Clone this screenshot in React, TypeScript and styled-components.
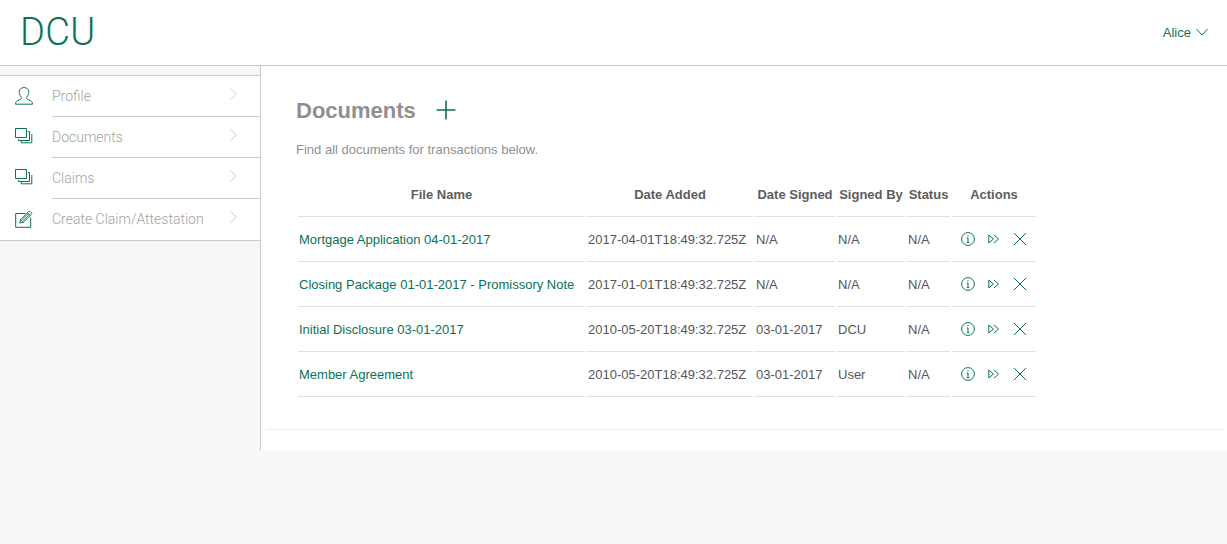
import React from "react";
import styled, { createGlobalStyle } from "styled-components";

const green = "#0b7256";

const Global = createGlobalStyle`
  html, body { margin: 0; padding: 0; background: #f7f7f7; }
  body { font-family: "Liberation Sans", Arial, sans-serif; }
`;

const Page = styled.div`
  width: 1227px;
  height: 544px;
  overflow: hidden;
  background: #f7f7f7;
`;

const Header = styled.header`
  height: 65px;
  background: #fff;
  border-bottom: 1px solid #c9c9c9;
  display: flex;
  align-items: flex-start;
  justify-content: space-between;
`;

const Logo = styled.div`
  font-family: Roboto, sans-serif;
  font-weight: 300;
  font-size: 38px;
  letter-spacing: 0.3px;
  line-height: 44px;
  margin: 10px 0 0 20px;
  color: ${green};
`;

const UserMenu = styled.div`
  display: flex;
  align-items: flex-start;
  gap: 5px;
  margin: 25px 19px 0 0;
  font-size: 13px;
  line-height: 15px;
  color: ${green};
  svg { margin-top: 3px; }
`;

const Body = styled.div`
  display: flex;
  height: 384px;
`;

const Sidebar = styled.nav`
  width: 260px;
  padding-top: 9px;
  border-right: 1px solid #c9c9c9;
  flex: none;
`;

const NavList = styled.ul`
  list-style: none;
  margin: 0;
  padding: 0;
  background: #fff;
  border-top: 1px solid #c9c9c9;
  border-bottom: 1px solid #c9c9c9;
`;

const NavItem = styled.li`
  height: 41px;
  display: flex;
  align-items: center;
  color: #a3a3a3;
  font-family: Roboto, sans-serif;
  font-weight: 300;
  font-size: 14px;
  &:not(:last-child) > span { border-bottom-color: #c9c9c9; }
`;

const NavIcon = styled.div`
  width: 52px;
  height: 100%;
  flex: none;
  padding: 11px 0 0 15px;
  box-sizing: border-box;
  svg { display: block; }
`;

const NavLabel = styled.span`
  flex: 1;
  height: 100%;
  box-sizing: border-box;
  display: flex;
  align-items: center;
  justify-content: space-between;
  padding: 0 23px 0 0;
  border-bottom: 1px solid transparent;
`;

const Main = styled.main`
  flex: 1;
  background: #fff;
  padding: 24px 3px 0 5px;
`;

const TitleRow = styled.div`
  display: flex;
  align-items: center;
  gap: 20px;
  height: 40px;
  margin-left: 30px;
`;

const Title = styled.h1`
  margin: 0;
  padding-top: 1px;
  font-size: 22px;
  font-weight: 700;
  color: #8f8f8f;
`;

const Lead = styled.p`
  margin: 11px 0 0 30px;
  font-size: 13px;
  line-height: 18px;
  color: #8f8f92;
`;

const Table = styled.table`
  margin: 11px 0 0 30px;
  border-collapse: separate;
  border-spacing: 2px 0;
  table-layout: fixed;
  width: 742px;
  font-size: 13px;
`;

const Th = styled.th`
  height: 47px;
  padding: 2px 0 0;
  box-sizing: border-box;
  text-align: center;
  border-bottom: 1px solid #e2e2e2;
  color: #5d5d60;
  font-size: 13px;
  font-weight: 700;
  white-space: nowrap;
`;

const Td = styled.td`
  height: 45px;
  padding: 0 1px;
  box-sizing: border-box;
  border-bottom: 1px solid #e2e2e2;
  color: #55555a;
  white-space: nowrap;
  overflow: visible;
`;

const FileLink = styled.a`
  color: ${green};
  text-decoration: none;
`;

const Actions = styled.div`
  display: flex;
  align-items: center;
  gap: 12px;
  padding-left: 8px;
  svg { display: block; flex: none; }
`;

const Divider = styled.hr`
  margin: 32px 0 0 0;
  border: 0;
  border-top: 1px solid #ececec;
`;

const Svg = styled.svg`
  fill: none;
  stroke: ${green};
  stroke-width: 1;
`;

const Chevron = () => (
  <svg width="7" height="12" viewBox="0 0 7 12" fill="none" stroke="#cfcfcf" strokeWidth="1" style={{ marginTop: -4 }}>
    <path d="M.5.5L6.3 6 .5 11.5" />
  </svg>
);

const UserIcon = () => (
  <Svg width="18" height="18" viewBox="0 0 18 18">
    <path d="M.5 17.2h17c0-2.6-1.6-3.5-3.6-4.2-1.6-.6-2.4-1-2.4-2.2 0-.8 1.6-2 1.9-3.6.2-.2.4-.8.3-3C13.4 2 11.7.6 9 .6S4.6 2 4.3 4.2c-.1 2.2.1 2.8.3 3 .3 1.6 1.9 2.8 1.9 3.6 0 1.2-.8 1.6-2.4 2.2C2.1 13.7.5 14.6.5 17.2z" />
  </Svg>
);

const DocsIcon = () => (
  <Svg width="18" height="16" viewBox="0 0 18 16">
    <path d="M.5.5h11v9H.5z" />
    <path d="M13 3.5h1.5v9h-11V11" />
    <path d="M16.8 6v8.8H6.2V12.8" />
  </Svg>
);

const EditIcon = () => (
  <Svg width="18" height="18" viewBox="0 0 18 18">
    <path d="M10.5 3.5H.7v13.8h15V7.5" />
    <path d="M4.8 13l.9-3.4L13.6 1.6c.5-.5 1.1-.5 1.6 0l1.2 1.2c.5.5.5 1.1 0 1.6L8.3 12.2z" />
    <path d="M5.7 9.6l2.6 2.6M12.4 2.9l2.7 2.7M7 9.8l6.5-6.5M8 10.8l6.5-6.5" strokeWidth=".8" />
  </Svg>
);

const InfoIcon = () => (
  <Svg width="14" height="14" viewBox="0 0 14 14">
    <circle cx="7" cy="7" r="6.4" />
    <path d="M7 3v1.4M7 6v4.6M5.8 6H7M5.8 10.6h2.4" />
  </Svg>
);

const ForwardIcon = () => (
  <Svg width="12" height="10" viewBox="0 0 12 10" style={{ marginLeft: 1 }}>
    <path d="M.8 1v8l4.6-4z" />
    <path d="M6 1l4.6 4L6 9" />
  </Svg>
);

const CloseIcon = () => (
  <Svg width="14" height="14" viewBox="0 0 14 14" style={{ marginLeft: 1 }}>
    <path d="M1 1l12 12M13 1L1 13" />
  </Svg>
);

const PlusIcon = () => (
  <Svg width="20" height="20" viewBox="0 0 20 20" style={{ strokeWidth: 1.6 }}>
    <path d="M10 .5v19M.5 10h19" />
  </Svg>
);

const nav = [
  { label: "Profile", icon: <UserIcon /> },
  { label: "Documents", icon: <DocsIcon /> },
  { label: "Claims", icon: <DocsIcon /> },
  { label: "Create Claim/Attestation", icon: <EditIcon /> },
];

const rows = [
  ["Mortgage Application 04-01-2017", "2017-04-01T18:49:32.725Z", "N/A", "N/A", "N/A"],
  ["Closing Package 01-01-2017 - Promissory Note", "2017-01-01T18:49:32.725Z", "N/A", "N/A", "N/A"],
  ["Initial Disclosure 03-01-2017", "2010-05-20T18:49:32.725Z", "03-01-2017", "DCU", "N/A"],
  ["Member Agreement", "2010-05-20T18:49:32.725Z", "03-01-2017", "User", "N/A"],
];

const widths = [287, 166, 80, 68, 43, 84];
const heads = ["File Name", "Date Added", "Date Signed", "Signed By", "Status", "Actions"];

export default function App() {
  return (
    <Page>
      <Global />
      <Header>
        <Logo>DCU</Logo>
        <UserMenu>
          <span>Alice</span>
          <svg width="12" height="8" viewBox="0 0 12 8" fill="none" stroke={green} strokeWidth="1">
            <path d="M.5 1l5.5 6 5.5-6" />
          </svg>
        </UserMenu>
      </Header>
      <Body>
        <Sidebar>
          <NavList>
            {nav.map((n) => (
              <NavItem key={n.label}>
                <NavIcon>{n.icon}</NavIcon>
                <NavLabel>
                  {n.label}
                  <Chevron />
                </NavLabel>
              </NavItem>
            ))}
          </NavList>
        </Sidebar>
        <Main>
          <TitleRow>
            <Title>Documents</Title>
            <PlusIcon />
          </TitleRow>
          <Lead>Find all documents for transactions below.</Lead>
          <Table>
            <colgroup>
              {widths.map((w, i) => (
                <col key={i} style={{ width: w }} />
              ))}
            </colgroup>
            <thead>
              <tr>
                {heads.map((h) => (
                  <Th key={h}>{h}</Th>
                ))}
              </tr>
            </thead>
            <tbody>
              {rows.map((r) => (
                <tr key={r[0]}>
                  <Td>
                    <FileLink href="#">{r[0]}</FileLink>
                  </Td>
                  <Td>{r[1]}</Td>
                  <Td>{r[2]}</Td>
                  <Td>{r[3]}</Td>
                  <Td>{r[4]}</Td>
                  <Td>
                    <Actions>
                      <InfoIcon />
                      <ForwardIcon />
                      <CloseIcon />
                    </Actions>
                  </Td>
                </tr>
              ))}
            </tbody>
          </Table>
          <Divider />
        </Main>
      </Body>
    </Page>
  );
}
